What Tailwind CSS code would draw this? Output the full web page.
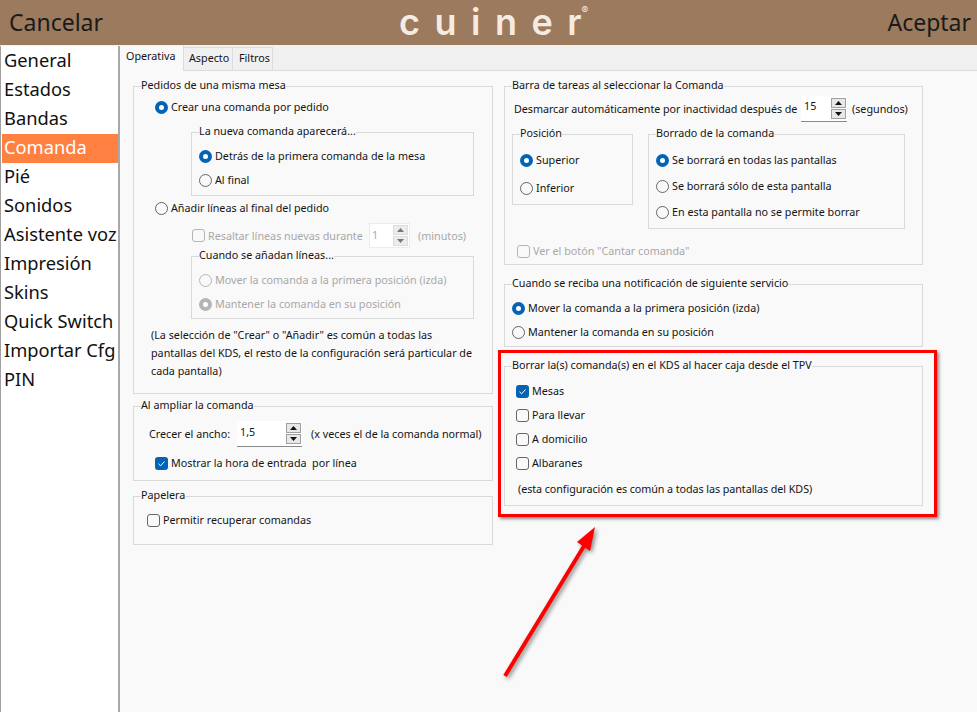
<!DOCTYPE html>
<html lang="es">
<head>
  <meta charset="UTF-8" />
  <title>Cuiner KDS - Comanda</title>
  <script src="https://cdn.jsdelivr.net/npm/@tailwindcss/browser@4"></script>
</head>
<body class="relative w-[977px] h-[712px] overflow-hidden bg-[#f0f0f0] font-['Noto_Sans',sans-serif] text-[10.75px] leading-[14px] text-[#141414]">

  <!-- Header -->
  <header class="h-[45px] bg-[#9b7a5e] flex items-center pb-[2px] pl-[9px] pr-[6px] text-[23px] text-[#1a1a1a]">
    <span class="w-[390px]">Cancelar</span>
    <span class="flex-1 flex items-start text-[#f6ebe2] font-['Inter',sans-serif] font-semibold text-[36px] leading-[38px] tracking-[14.5px]">cuine<span class="tracking-normal">r</span><span class="text-[10px] leading-[10px] font-normal tracking-normal mt-[2px]">®</span></span>
    <span>Aceptar</span>
  </header>

  <div class="flex h-[667px] mt-px">
    <!-- Sidebar -->
    <nav class="w-[120px] shrink-0 bg-white border-l border-l-[#a0a0a0] border-r-2 border-r-[#a8a8a8] pl-px pt-px text-[18.3px] leading-[25px] text-[#111] whitespace-nowrap">
      <div class="h-[29px] pl-[2px]">General</div>
      <div class="h-[29px] pl-[2px]">Estados</div>
      <div class="h-[29px] pl-[2px]">Bandas</div>
      <div class="h-[29px] pl-[2px] bg-[#ff8040] text-white">Comanda</div>
      <div class="h-[29px] pl-[2px]">Pié</div>
      <div class="h-[29px] pl-[2px]">Sonidos</div>
      <div class="h-[29px] pl-[2px]">Asistente voz</div>
      <div class="h-[29px] pl-[2px]">Impresión</div>
      <div class="h-[29px] pl-[2px]">Skins</div>
      <div class="h-[29px] pl-[2px]">Quick Switch</div>
      <div class="h-[29px] pl-[2px]">Importar Cfg</div>
      <div class="h-[29px] pl-[2px]">PIN</div>
    </nav>

    <main class="flex-1">
      <!-- Tabs -->
      <div class="flex h-[25px] border-b border-[#dcdcdc]">
        <div class="w-[64px] h-[25px] bg-[#f9f9f9] border-r border-[#dcdcdc] pl-[6px] pt-[3px]">Operativa</div>
        <div class="w-[49px] h-[23px] mt-px border-r border-t border-[#dcdcdc] pl-[5px] pt-[3px]">Aspecto</div>
        <div class="w-[40px] h-[23px] mt-px border-r border-t border-[#dcdcdc] pl-[6px] pt-[3px]">Filtros</div>
      </div>

      <div class="h-[642px] bg-[#f9f9f9] flex gap-[11px] pl-[13px] pt-[8px]">
        <!-- Left column -->
        <div class="w-[360px] flex flex-col gap-[5px]">
          <fieldset class="h-[315px] border border-[#d9d9d9]">
            <legend class="ml-[7px] h-[14px] leading-[12px]">Pedidos de una misma mesa</legend>
            <div class="flex items-center gap-[3px] h-[24px] mt-[2px] ml-[21px]">
              <span class="w-[13px] h-[13px] rounded-full border-[4px] border-[#0563b6] bg-white"></span>
              <span>Crear una comanda por pedido</span>
            </div>
            <fieldset class="h-[71px] w-[283px] ml-[57px] mt-[6px] border border-[#d9d9d9]">
              <legend class="ml-[7px] h-[14px] leading-[12px]">La nueva comanda aparecerá...</legend>
              <div class="flex items-center gap-[3px] h-[24px] mt-[5px] ml-[7px]">
                <span class="w-[13px] h-[13px] rounded-full border-[4px] border-[#0563b6] bg-white"></span>
                <span>Detrás de la primera comanda de la mesa</span>
              </div>
              <div class="flex items-center gap-[3px] h-[24px] ml-[7px]">
                <span class="w-[13px] h-[13px] rounded-full border border-[#666] bg-[#f9f9f9]"></span>
                <span>Al final</span>
              </div>
            </fieldset>
            <div class="flex items-center gap-[3px] h-[24px] ml-[21px]">
              <span class="w-[13px] h-[13px] rounded-full border border-[#666] bg-[#f9f9f9]"></span>
              <span>Añadir líneas al final del pedido</span>
            </div>
            <div class="flex items-center h-[25px] mt-[3px] ml-[58px] text-[#a8a8a8]">
              <span class="w-[13px] h-[13px] rounded-[3px] border border-[#b5b5b5] mr-[3px]"></span>
              <span class="w-[161px]">Resaltar líneas nuevas durante</span>
              <div class="flex justify-between w-[41px] h-[25px] bg-white border border-[#ececec] pl-[2px] leading-[22px]">
                <span>1</span>
                <span class="flex flex-col gap-px p-px">
                  <span class="w-[15px] h-[10px] flex items-center justify-center bg-[#ececec] border border-[#ddd]"><svg width="7" height="4" viewBox="0 0 7 4"><path d="M3.5 0L7 4H0z" fill="#777"/></svg></span>
                  <span class="w-[15px] h-[10px] flex items-center justify-center bg-[#ececec] border border-[#ddd]"><svg width="7" height="4" viewBox="0 0 7 4"><path d="M0 0H7L3.5 4z" fill="#777"/></svg></span>
                </span>
              </div>
              <span class="ml-[8px]">(minutos)</span>
            </div>
            <fieldset class="h-[70px] w-[283px] ml-[57px] mt-px border border-[#d9d9d9]">
              <legend class="ml-[7px] h-[14px] leading-[12px]">Cuando se añadan líneas...</legend>
              <div class="flex items-center gap-[3px] h-[24px] mt-[5px] ml-[7px] text-[#a8a8a8]">
                <span class="w-[13px] h-[13px] rounded-full border border-[#b5b5b5]"></span>
                <span>Mover la comanda a la primera posición (izda)</span>
              </div>
              <div class="flex items-center gap-[3px] h-[24px] ml-[7px] text-[#a8a8a8]">
                <span class="w-[13px] h-[13px] rounded-full border-[4px] border-[#b5b5b5] bg-white"></span>
                <span>Mantener la comanda en su posición</span>
              </div>
            </fieldset>
            <p class="mt-[7px] ml-[17px] leading-[18px]">(La selección de "Crear" o "Añadir" es común a todas las<br />pantallas del KDS, el resto de la configuración será particular de<br />cada pantalla)</p>
          </fieldset>

          <fieldset class="h-[82px] border border-[#d9d9d9]">
            <legend class="ml-[7px] h-[14px] leading-[12px]">Al ampliar la comanda</legend>
            <div class="flex items-center h-[26px] mt-[8px] ml-[15px]">
              <span class="w-[88px]">Crecer el ancho:</span>
              <div class="flex justify-between w-[65px] h-[26px] bg-white border-b border-[#8a8a8a] pl-[3px] leading-[22px]">
                <span>1,5</span>
                <span class="flex flex-col gap-px pt-[2px] pr-px">
                  <span class="w-[15px] h-[10px] flex items-center justify-center bg-[#e8e8e8] border border-[#a0a0a0]"><svg width="7" height="4" viewBox="0 0 7 4"><path d="M3.5 0L7 4H0z" fill="#111"/></svg></span>
                  <span class="w-[15px] h-[10px] flex items-center justify-center bg-[#e8e8e8] border border-[#a0a0a0]"><svg width="7" height="4" viewBox="0 0 7 4"><path d="M0 0H7L3.5 4z" fill="#111"/></svg></span>
                </span>
              </div>
              <span class="ml-[9px] whitespace-nowrap">(x veces el de la comanda normal)</span>
            </div>
            <div class="flex items-center gap-[3px] h-[24px] mt-[4px] ml-[21px]">
              <span class="w-[13px] h-[13px] rounded-[3px] bg-[#0563b6] flex items-center justify-center"><svg width="9" height="9" viewBox="0 0 9 9" fill="none" stroke="#fff" stroke-width="1"><path d="M1.5 4.8L3.6 6.8L7.5 2.5"/></svg></span>
              <span>Mostrar la hora de entrada&nbsp; por línea</span>
            </div>
          </fieldset>

          <fieldset class="h-[56px] mt-[3px] border border-[#d9d9d9]">
            <legend class="ml-[7px] h-[14px] leading-[12px]">Papelera</legend>
            <div class="flex items-center gap-[3px] h-[24px] mt-[5px] ml-[13px]">
              <span class="w-[13px] h-[13px] rounded-[3px] border border-[#666]"></span>
              <span>Permitir recuperar comandas</span>
            </div>
          </fieldset>
        </div>

        <!-- Right column -->
        <div class="w-[419px] flex flex-col gap-[12px]">
          <fieldset class="h-[186px] border border-[#d9d9d9]">
            <legend class="ml-[7px] h-[14px] leading-[12px]">Barra de tareas al seleccionar la Comanda</legend>
            <div class="flex items-center h-[26px] mt-[3px] ml-[9px]">
              <span class="w-[287px] whitespace-nowrap tracking-[-0.05px]">Desmarcar automáticamente por inactividad después de</span>
              <div class="flex justify-between w-[46px] h-[26px] bg-white border-b border-[#8a8a8a] pl-[3px] leading-[20px]">
                <span>15</span>
                <span class="flex flex-col gap-px pt-[2px] pr-px">
                  <span class="w-[15px] h-[10px] flex items-center justify-center bg-[#e8e8e8] border border-[#a0a0a0]"><svg width="7" height="4" viewBox="0 0 7 4"><path d="M3.5 0L7 4H0z" fill="#111"/></svg></span>
                  <span class="w-[15px] h-[10px] flex items-center justify-center bg-[#e8e8e8] border border-[#a0a0a0]"><svg width="7" height="4" viewBox="0 0 7 4"><path d="M0 0H7L3.5 4z" fill="#111"/></svg></span>
                </span>
              </div>
              <span class="ml-[5px]">(segundos)</span>
            </div>
            <div class="flex items-start gap-[15px] mt-[5px] ml-[7px]">
              <fieldset class="w-[121px] h-[78px] border border-[#d9d9d9]">
                <legend class="ml-[7px] h-[14px] leading-[12px]">Posición</legend>
                <div class="flex items-center gap-[3px] h-[24px] mt-[7px] ml-[7px]">
                  <span class="w-[13px] h-[13px] rounded-full border-[4px] border-[#0563b6] bg-white"></span>
                  <span>Superior</span>
                </div>
                <div class="flex items-center gap-[3px] h-[24px] mt-[4px] ml-[7px]">
                  <span class="w-[13px] h-[13px] rounded-full border border-[#666] bg-[#f9f9f9]"></span>
                  <span>Inferior</span>
                </div>
              </fieldset>
              <fieldset class="w-[257px] h-[102px] border border-[#d9d9d9]">
                <legend class="ml-[7px] h-[14px] leading-[12px]">Borrado de la comanda</legend>
                <div class="flex items-center gap-[3px] h-[26px] mt-[6px] ml-[7px]">
                  <span class="w-[13px] h-[13px] rounded-full border-[4px] border-[#0563b6] bg-white"></span>
                  <span>Se borrará en todas las pantallas</span>
                </div>
                <div class="flex items-center gap-[3px] h-[26px] ml-[7px]">
                  <span class="w-[13px] h-[13px] rounded-full border border-[#666] bg-[#f9f9f9]"></span>
                  <span>Se borrará sólo de esta pantalla</span>
                </div>
                <div class="flex items-center gap-[3px] h-[26px] ml-[7px]">
                  <span class="w-[13px] h-[13px] rounded-full border border-[#666] bg-[#f9f9f9]"></span>
                  <span>En esta pantalla no se permite borrar</span>
                </div>
              </fieldset>
            </div>
            <div class="flex items-center gap-[3px] h-[24px] mt-[10px] ml-[12px] text-[#a8a8a8]">
              <span class="w-[13px] h-[13px] rounded-[3px] border border-[#b5b5b5]"></span>
              <span>Ver el botón "Cantar comanda"</span>
            </div>
          </fieldset>

          <fieldset class="h-[70px] border border-[#d9d9d9]">
            <legend class="ml-[7px] h-[14px] leading-[12px]">Cuando se reciba una notificación de siguiente servicio</legend>
            <div class="flex items-center gap-[3px] h-[24px] mt-[5px] ml-[7px]">
              <span class="w-[13px] h-[13px] rounded-full border-[4px] border-[#0563b6] bg-white"></span>
              <span>Mover la comanda a la primera posición (izda)</span>
            </div>
            <div class="flex items-center gap-[3px] h-[24px] ml-[7px]">
              <span class="w-[13px] h-[13px] rounded-full border border-[#666] bg-[#f9f9f9]"></span>
              <span>Mantener la comanda en su posición</span>
            </div>
          </fieldset>

          <fieldset class="h-[147px] border border-[#d9d9d9]">
            <legend class="ml-[7px] h-[14px] leading-[12px]">Borrar la(s) comanda(s) en el KDS al hacer caja desde el TPV</legend>
            <div class="flex items-center gap-[3px] h-[24px] mt-[6px] ml-[11px]">
              <span class="w-[13px] h-[13px] rounded-[3px] bg-[#0563b6] flex items-center justify-center"><svg width="9" height="9" viewBox="0 0 9 9" fill="none" stroke="#fff" stroke-width="1"><path d="M1.5 4.8L3.6 6.8L7.5 2.5"/></svg></span>
              <span>Mesas</span>
            </div>
            <div class="flex items-center gap-[3px] h-[24px] ml-[11px]">
              <span class="w-[13px] h-[13px] rounded-[3px] border border-[#666]"></span>
              <span>Para llevar</span>
            </div>
            <div class="flex items-center gap-[3px] h-[24px] ml-[11px]">
              <span class="w-[13px] h-[13px] rounded-[3px] border border-[#666]"></span>
              <span>A domicilio</span>
            </div>
            <div class="flex items-center gap-[3px] h-[24px] ml-[11px]">
              <span class="w-[13px] h-[13px] rounded-[3px] border border-[#666]"></span>
              <span>Albaranes</span>
            </div>
            <p class="mt-[5px] ml-[13px] leading-[18px] tracking-[-0.07px]">(esta configuración es común a todas las pantallas del KDS)</p>
          </fieldset>
        </div>
      </div>
    </main>
  </div>

  <!-- Red annotation over the screenshot -->
  <div class="absolute left-[498px] top-[350px] w-[439px] h-[167px] border-[3px] border-[#ff0000] shadow-[2px_2px_3px_rgba(0,0,0,0.45)]"></div>
  <svg class="absolute left-[495px] top-[520px] drop-shadow-[2px_2px_2px_rgba(0,0,0,0.45)]" width="110" height="165" viewBox="495 520 110 165">
    <path d="M505 676L584 546" stroke="#ff0000" stroke-width="4" fill="none"/>
    <path d="M595 527L590 551L577 542z" fill="#ff0000"/>
  </svg>
</body>
</html>
